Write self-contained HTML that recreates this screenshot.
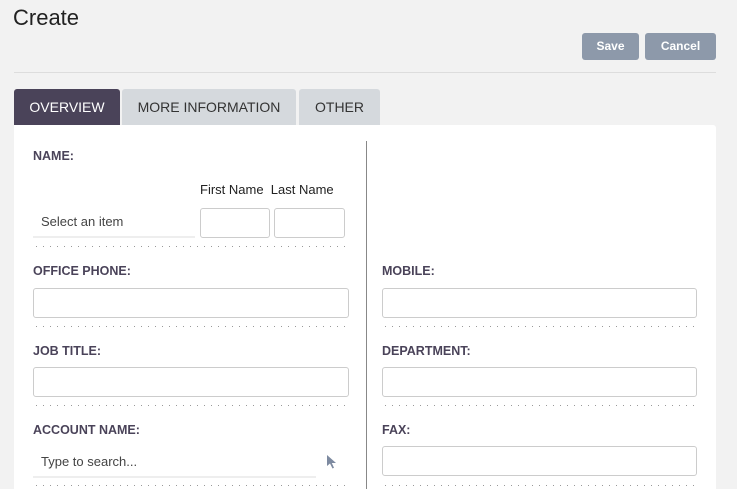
<!DOCTYPE html>
<html><head><style>
*{margin:0;padding:0;box-sizing:border-box}
body{width:737px;height:489px;background:#f2f2f2;font-family:"Liberation Sans",sans-serif;position:relative;overflow:hidden;color:#333}
.a{position:absolute}
.btn{background:#8d99aa;color:#fff;font-weight:bold;font-size:12px;border-radius:3px;text-align:center;line-height:27px;height:27px;top:33px}
.tab{top:89px;height:36px;line-height:36px;text-align:center;font-size:14px;background:#d5d9dd;color:#333;border-radius:3px 3px 0 0}
.lbl{font-weight:bold;font-size:12.5px;color:#4a4359}
.inp{border:1px solid #ccc;border-radius:3px;background:#fff;height:30px}
.dot{height:1px;background-image:linear-gradient(to right,#999 1px,transparent 1px);background-size:7px 1px}
.s{font-size:13px;color:#444}
</style></head><body>
<div class="a" style="left:13px;top:5px;font-size:22px;color:#222">Create</div>
<div class="a btn" style="left:582px;width:57px">Save</div>
<div class="a btn" style="left:645px;width:71px">Cancel</div>
<div class="a" style="left:14px;top:72px;width:702px;height:1px;background:#ddd"></div>
<div class="a tab" style="left:14px;width:106px;background:#4a4359;color:#fff">OVERVIEW</div>
<div class="a tab" style="left:122px;width:174px">MORE INFORMATION</div>
<div class="a tab" style="left:299px;width:81px">OTHER</div>
<div class="a" style="left:14px;top:125px;width:702px;height:364px;background:#fff;border-radius:0 3px 0 0"></div>
<div class="a" style="left:366px;top:141px;width:1px;height:348px;background:#888"></div>

<div class="a lbl" style="left:33px;top:149px">NAME:</div>
<div class="a s" style="left:200px;top:182px;font-size:13px;color:#222">First Name&nbsp; Last Name</div>
<div class="a s" style="left:41px;top:214px">Select an item</div>
<div class="a" style="left:33px;top:236px;width:162px;height:2px;background:#eee"></div>
<div class="a inp" style="left:200px;top:208px;width:70px"></div>
<div class="a inp" style="left:274px;top:208px;width:71px"></div>
<div class="a dot" style="left:36px;top:246px;width:310px"></div>

<div class="a lbl" style="left:33px;top:264px">OFFICE PHONE:</div>
<div class="a inp" style="left:33px;top:288px;width:316px"></div>
<div class="a dot" style="left:36px;top:326px;width:310px"></div>
<div class="a lbl" style="left:382px;top:264px">MOBILE:</div>
<div class="a inp" style="left:382px;top:288px;width:315px"></div>
<div class="a dot" style="left:385px;top:326px;width:310px"></div>

<div class="a lbl" style="left:33px;top:344px">JOB TITLE:</div>
<div class="a inp" style="left:33px;top:367px;width:316px"></div>
<div class="a dot" style="left:36px;top:405px;width:310px"></div>
<div class="a lbl" style="left:382px;top:344px">DEPARTMENT:</div>
<div class="a inp" style="left:382px;top:367px;width:315px"></div>
<div class="a dot" style="left:385px;top:405px;width:310px"></div>

<div class="a lbl" style="left:33px;top:423px">ACCOUNT NAME:</div>
<div class="a s" style="left:41px;top:454px">Type to search...</div>
<div class="a" style="left:33px;top:476px;width:283px;height:2px;background:#eee"></div>
<svg class="a" style="left:326px;top:454px" width="13" height="16" viewBox="0 0 13 16"><path d="M1 1 L1 12 L4 9.5 L6.5 14.5 L8 13.8 L5.8 9 L10 9 Z" fill="#7d8aa0"/></svg>
<div class="a dot" style="left:36px;top:485px;width:310px"></div>
<div class="a lbl" style="left:382px;top:423px">FAX:</div>
<div class="a inp" style="left:382px;top:446px;width:315px"></div>
<div class="a dot" style="left:385px;top:485px;width:310px"></div>
</body></html>
